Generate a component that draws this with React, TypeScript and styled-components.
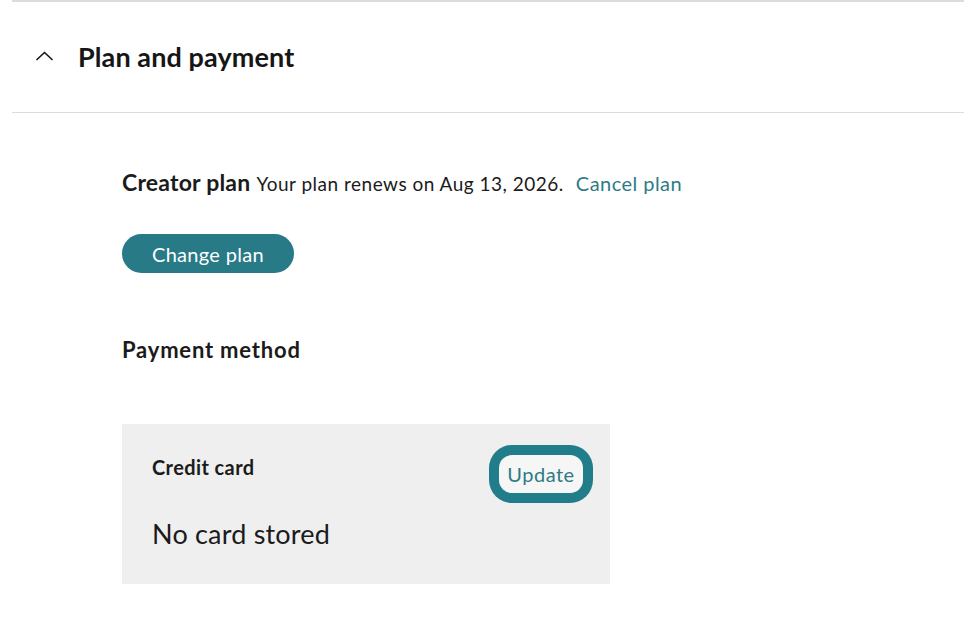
import React from "react"
import styled, { createGlobalStyle } from "styled-components"

const GlobalStyle = createGlobalStyle`
  body {
    margin: 0;
    background: #ffffff;
    font-family: Lato, "Open Sans", Arial, sans-serif;
    color: #1b1b1b;
  }
`

const Section = styled.section`
  margin-left: 12px;
  border-top: 2px solid #dcdcdc;
`

const Header = styled.div`
  height: 110px;
  display: flex;
  align-items: center;
  gap: 25px;
  padding-left: 24px;
  border-bottom: 1px solid #dcdcdc;
`

const Chevron = styled.svg`
  width: 17px;
  height: 10px;
  margin-top: -2px;
`

const Title = styled.h2`
  margin: 0;
  font-size: 27px;
  font-weight: 700;
  line-height: 32px;
  letter-spacing: 0.1px;
  color: #161616;
`

const Body = styled.div`
  padding: 55px 0 40px 110px;
`

const PlanLine = styled.p`
  margin: 0;
  line-height: 28px;
  font-size: 19px;
  letter-spacing: 0.5px;
  color: #1b1b1b;
`

const PlanName = styled.strong`
  font-size: 23px;
  font-weight: 700;
  letter-spacing: 0.2px;
  margin-right: 6px;
`

const TextLink = styled.a`
  margin-left: 12px;
  font-size: 20px;
  letter-spacing: 0.45px;
  color: #2d7b86;
  text-decoration: none;
  cursor: pointer;
`

const PillButton = styled.button`
  display: block;
  margin-top: 36px;
  height: 39px;
  padding: 0 30px;
  border: none;
  border-radius: 20px;
  background: #277a86;
  color: #ffffff;
  font-family: inherit;
  font-size: 20px;
  letter-spacing: 0.3px;
  cursor: pointer;
`

const SubHeading = styled.h3`
  margin: 63px 0 0;
  font-size: 22px;
  font-weight: 700;
  line-height: 28px;
  letter-spacing: 0.8px;
`

const Card = styled.div`
  margin-top: 60px;
  width: 488px;
  height: 160px;
  box-sizing: border-box;
  padding: 31px 27px 0 30px;
  background: #efefef;
`

const CardTop = styled.div`
  display: flex;
  justify-content: space-between;
  align-items: flex-start;
`

const CardLabel = styled.span`
  font-size: 20px;
  font-weight: 700;
  line-height: 24px;
  letter-spacing: 0.4px;
`

const FocusedButton = styled.button`
  width: 84px;
  height: 38px;
  border: none;
  border-radius: 13px;
  background: #f6f6f6;
  box-shadow: 0 0 0 10px #217d8a;
  color: #2d7b86;
  font-family: inherit;
  font-size: 20px;
  letter-spacing: 0.5px;
  cursor: pointer;
`

const CardValue = styled.p`
  margin: 25px 0 0;
  font-size: 27px;
  line-height: 32px;
  letter-spacing: 0.2px;
`

export default function App() {
  return (
    <>
      <GlobalStyle />
      <Section>
        <Header>
          <Chevron viewBox="0 0 17 10" fill="none">
            <polyline
              points="1,8.5 8.5,1.5 16,8.5"
              stroke="#1b1b1b"
              strokeWidth="1.7"
              strokeLinecap="round"
              strokeLinejoin="round"
            />
          </Chevron>
          <Title>Plan and payment</Title>
        </Header>
        <Body>
          <PlanLine>
            <PlanName>Creator plan</PlanName>
            Your plan renews on Aug 13, 2026.
            <TextLink>Cancel plan</TextLink>
          </PlanLine>
          <PillButton>Change plan</PillButton>
          <SubHeading>Payment method</SubHeading>
          <Card>
            <CardTop>
              <CardLabel>Credit card</CardLabel>
              <FocusedButton>Update</FocusedButton>
            </CardTop>
            <CardValue>No card stored</CardValue>
          </Card>
        </Body>
      </Section>
    </>
  )
}
